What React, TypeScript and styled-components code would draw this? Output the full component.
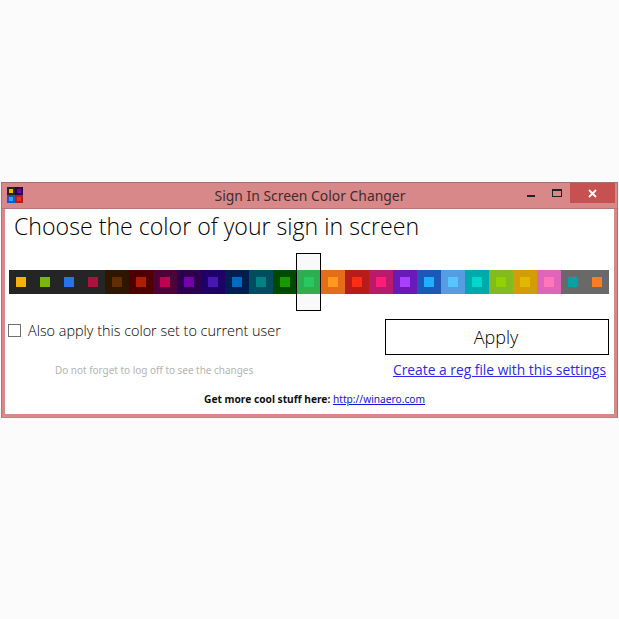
import React from "react";
import styled, { createGlobalStyle } from "styled-components";

const Global = createGlobalStyle`
  html, body { margin: 0; padding: 0; background: #fbfbfb; }
  body { font-family: "Open Sans", "Noto Sans", sans-serif; }
`;

const Page = styled.div`
  width: 619px;
  height: 619px;
  padding: 182px 0 0 1px;
  box-sizing: border-box;
`;

const Window = styled.div`
  width: 617px;
  height: 236px;
  box-sizing: border-box;
  display: flex;
  flex-direction: column;
  background: #d9888a;
  border: 1px solid #ad7376;
  border-top-color: #ab6f72;
  border-bottom-color: #c98084;
  padding: 0 3px 3px;
`;

const TitleBar = styled.div`
  position: relative;
  height: 25px;
  flex: none;
  display: flex;
  align-items: center;
  justify-content: center;
  border-bottom: 1px solid #b87478;
  box-sizing: content-box;
  margin: 0 -3px;
`;

const TitleText = styled.span`
  font-family: "Noto Sans", sans-serif;
  font-size: 13.9px;
  color: #3d2d2e;
  margin-top: -1px;
  margin-left: 1px;
`;

const AppIcon = styled.svg`
  position: absolute;
  left: 5px;
  top: 4px;
`;

const WindowButtons = styled.div`
  position: absolute;
  right: 2px;
  top: 0;
  display: flex;
  height: 20px;
`;

const WindowButton = styled.div<{ $w: number; $close?: boolean }>`
  width: ${(p) => p.$w}px;
  height: 20px;
  display: flex;
  align-items: center;
  justify-content: center;
  background: ${(p) => (p.$close ? "#c75050" : "transparent")};
`;

const Content = styled.div`
  flex: 1;
  background: #ffffff;
  padding: 0 5px 0 4px;
  display: flex;
  flex-direction: column;
`;

const Heading = styled.h1`
  margin: 0 0 0 5px;
  height: 61px;
  box-sizing: border-box;
  font-family: "Open Sans", sans-serif;
  font-size: 23.15px;
  font-weight: 300;
  line-height: 34px;
  color: #000;
  white-space: nowrap;
`;

const Strip = styled.div`
  position: relative;
  display: flex;
  width: 600px;
  height: 24px;
`;

const Swatch = styled.div<{ $outer: string; $inner: string }>`
  width: 24px;
  height: 24px;
  display: flex;
  align-items: center;
  justify-content: center;
  background: ${(p) => p.$outer};
  &::after {
    content: "";
    width: 10px;
    height: 10px;
    background: ${(p) => p.$inner};
  }
`;

const Selection = styled.div`
  position: absolute;
  left: 287px;
  top: -17px;
  width: 25px;
  height: 58px;
  box-sizing: border-box;
  border: 1px solid #000;
  background: linear-gradient(
    to bottom,
    #f9f9f9 0 16px,
    transparent 16px 40px,
    #f9f9f9 40px
  );
`;

const Options = styled.div`
  display: flex;
  justify-content: space-between;
  margin-top: 25px;
  height: 67px;
`;

const LeftColumn = styled.div`
  display: flex;
  flex-direction: column;
`;

const CheckRow = styled.label`
  display: flex;
  align-items: center;
  gap: 7px;
  height: 22px;
  margin-left: -1px;
`;

const CheckBox = styled.span`
  width: 13px;
  height: 13px;
  box-sizing: border-box;
  border: 1px solid #707070;
  background: #fff;
`;

const CheckLabel = styled.span`
  font-size: 14.4px;
  font-family: "Open Sans", sans-serif;
  font-weight: 300;
  color: #000;
  white-space: nowrap;
`;

const Hint = styled.div`
  margin: 22px 0 0 46px;
  font-family: "Noto Sans", sans-serif;
  font-size: 9.95px;
  line-height: 14px;
  color: #b4b4b4;
  white-space: nowrap;
`;

const RightColumn = styled.div`
  width: 224px;
  display: flex;
  flex-direction: column;
  align-items: flex-end;
`;

const ApplyButton = styled.button`
  width: 224px;
  height: 36px;
  padding: 0 2px 0 0;
  box-sizing: border-box;
  border: 1px solid #000;
  background: #fff;
  font-family: "Open Sans", sans-serif;
  font-weight: 300;
  font-size: 18px;
  color: #000;
`;

const RegLink = styled.a`
  margin: 5px 3px 0 0;
  font-family: "Open Sans", sans-serif;
  font-weight: 400;
  font-size: 13.8px;
  line-height: 20px;
  color: #2a2aee;
  text-decoration: underline;
  white-space: nowrap;
`;

const Footer = styled.div`
  margin-top: 6px;
  text-align: center;
  font-family: "Noto Sans", sans-serif;
  font-size: 10.2px;
  font-weight: 700;
  line-height: 14px;
  color: #111;
  padding-left: 11px;
  white-space: nowrap;
`;

const FooterLink = styled.a`
  font-weight: 400;
  color: #1414d8;
  text-decoration: underline;
`;

const swatches: [string, string][] = [
  ["#252525", "#f4b300"],
  ["#252525", "#78ba00"],
  ["#252525", "#2673ec"],
  ["#252525", "#ae113d"],
  ["#2e1700", "#632f00"],
  ["#4e0000", "#b01e00"],
  ["#4e0038", "#c1004f"],
  ["#2d004e", "#7200ac"],
  ["#1f0068", "#4617b4"],
  ["#001e4e", "#006ac1"],
  ["#004d60", "#008287"],
  ["#004a00", "#199900"],
  ["#2fae4f", "#26c85f"],
  ["#e56c19", "#ff981d"],
  ["#b81b1b", "#ff2e12"],
  ["#b81b6c", "#ff1d77"],
  ["#691bb8", "#aa40ff"],
  ["#1b58b8", "#1fafff"],
  ["#569ce3", "#56c5ff"],
  ["#00aaaa", "#00d8cc"],
  ["#83ba1f", "#91d100"],
  ["#d39d09", "#e1b700"],
  ["#e064b7", "#ff76bc"],
  ["#696969", "#00a3a3"],
  ["#696969", "#fe7c22"],
];

export default function App() {
  return (
    <Page>
      <Global />
      <Window>
        <TitleBar>
          <AppIcon width="16" height="16" viewBox="0 0 16 16">
            <rect x="0" y="0" width="8" height="8" fill="#252525" />
            <rect x="8" y="0" width="8" height="8" fill="#2d004e" />
            <rect x="0" y="8" width="8" height="8" fill="#1b58b8" />
            <rect x="8" y="8" width="8" height="8" fill="#b81b1b" />
            <rect x="2" y="2" width="4" height="4" fill="#f4b300" />
            <rect x="10" y="2" width="4" height="4" fill="#7200ac" />
            <rect x="2" y="10" width="4" height="4" fill="#1fafff" />
            <rect x="10" y="10" width="4" height="4" fill="#ff2e12" />
          </AppIcon>
          <TitleText>Sign In Screen Color Changer</TitleText>
          <WindowButtons>
            <WindowButton $w={26}>
              <svg width="10" height="10" viewBox="0 0 10 10">
                <rect x="1" y="7" width="8" height="2" fill="#222" />
              </svg>
            </WindowButton>
            <WindowButton $w={26}>
              <svg width="10" height="8" viewBox="0 0 10 8">
                <rect x="0.5" y="0.5" width="9" height="7" fill="none" stroke="#222" />
                <rect x="0" y="0" width="10" height="2" fill="#222" />
              </svg>
            </WindowButton>
            <WindowButton $w={45} $close>
              <svg width="9" height="9" viewBox="0 0 9 9">
                <path d="M1 1 L8 8 M8 1 L1 8" stroke="#fff" strokeWidth="1.8" />
              </svg>
            </WindowButton>
          </WindowButtons>
        </TitleBar>
        <Content>
          <Heading>Choose the color of your sign in screen</Heading>
          <Strip>
            {swatches.map(([outer, inner], i) => (
              <Swatch key={i} $outer={outer} $inner={inner} />
            ))}
            <Selection />
          </Strip>
          <Options>
            <LeftColumn>
              <CheckRow>
                <CheckBox />
                <CheckLabel>Also apply this color set to current user</CheckLabel>
              </CheckRow>
              <Hint>Do not forget to log off to see the changes</Hint>
            </LeftColumn>
            <RightColumn>
              <ApplyButton>Apply</ApplyButton>
              <RegLink href="#">Create a reg file with this settings</RegLink>
            </RightColumn>
          </Options>
          <Footer>
            Get more cool stuff here: <FooterLink href="#">http://winaero.com</FooterLink>
          </Footer>
        </Content>
      </Window>
    </Page>
  );
}
